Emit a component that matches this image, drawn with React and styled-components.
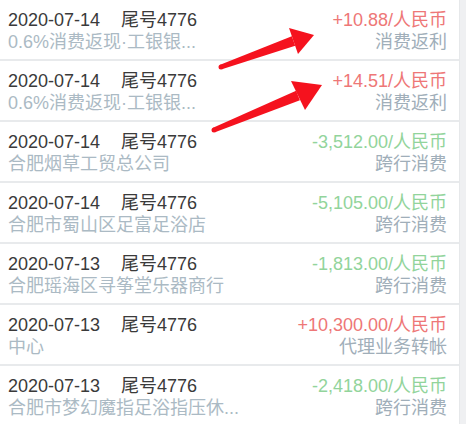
import React from "react";
import styled, { createGlobalStyle } from "styled-components";

const GlobalStyle = createGlobalStyle`
    html, body {
        margin: 0;
        padding: 0;
        background: #ffffff;
    }
`

const SScreen = styled.div`
    position: relative;
    width: 466px;
    height: 424px;
    overflow: hidden;
    display: flex;
    background: #ffffff;
    font-family: "Liberation Sans", "Noto Sans CJK SC", sans-serif;
`

const SList = styled.ul`
    flex: 1;
    margin: 0;
    padding: 0;
    list-style: none;
`

const SRow = styled.li`
    display: flex;
    justify-content: space-between;
    height: 59px;
    box-sizing: content-box;
    padding: 0 12px 0 8px;
    border-bottom: 2px solid #e8eaec;

    div.left, div.right {
        display: flex;
        flex-direction: column;
        padding-top: 9px;
        font-size: 18px;
        line-height: 22px;
        white-space: nowrap;
    }

    div.right {
        align-items: flex-end;
    }

    span.date {
        color: #3a3a3a;
    }

    span.card {
        margin-left: 21px;
    }

    span.desc {
        color: #abbac4;
    }

    span.type {
        color: #a0aeb9;
    }
`

const SAmount = styled.span`
    color: ${props => props.income ? '#ee7777' : '#92d49b'};
`

const SScrollbar = styled.div`
    width: 6px;
    background: #eff0f2;
    border-left: 1px solid #e6e8ea;
`

const SArrows = styled.svg`
    position: absolute;
    left: 0;
    top: 0;
    pointer-events: none;
`

const rows = [
    { date: '2020-07-14', desc: '0.6%消费返现·工银银...', amount: '+10.88/人民币', type: '消费返利' },
    { date: '2020-07-14', desc: '0.6%消费返现·工银银...', amount: '+14.51/人民币', type: '消费返利' },
    { date: '2020-07-14', desc: '合肥烟草工贸总公司', amount: '-3,512.00/人民币', type: '跨行消费' },
    { date: '2020-07-14', desc: '合肥市蜀山区足富足浴店', amount: '-5,105.00/人民币', type: '跨行消费' },
    { date: '2020-07-13', desc: '合肥瑶海区寻筝堂乐器商行', amount: '-1,813.00/人民币', type: '跨行消费' },
    { date: '2020-07-13', desc: '中心', amount: '+10,300.00/人民币', type: '代理业务转帐' },
    { date: '2020-07-13', desc: '合肥市梦幻魔指足浴指压休...', amount: '-2,418.00/人民币', type: '跨行消费' },
]

// tapered shaft from tail to the head base, then a triangular head
const Arrow = ({ tail, tip, top, bottom }) => {
    const base = [(top[0] + bottom[0]) / 2, (top[1] + bottom[1]) / 2]
    const dx = base[0] - tail[0]
    const dy = base[1] - tail[1]
    const len = Math.hypot(dx, dy)
    const nx = -dy / len
    const ny = dx / len
    const p = (pt, w) => `${pt[0] + nx * w},${pt[1] + ny * w}`
    const shaft = `${p(tail, 2.5)} ${p(base, 5)} ${p(base, -5)} ${p(tail, -2.5)}`
    return (
        <g fill="#f5121e">
            <circle cx={tail[0]} cy={tail[1]} r="2.5" />
            <polygon points={shaft} />
            <polygon points={`${top.join(',')} ${tip.join(',')} ${bottom.join(',')}`} />
        </g>
    )
}

const App = () => (
    <>
        <GlobalStyle />
        <SScreen>
            <SList>
                {rows.map((row, i) => (
                    <SRow key={i}>
                        <div className="left">
                            <span className="date">
                                {row.date}
                                <span className="card">尾号4776</span>
                            </span>
                            <span className="desc">{row.desc}</span>
                        </div>
                        <div className="right">
                            <SAmount income={row.amount.startsWith('+')}>{row.amount}</SAmount>
                            <span className="type">{row.type}</span>
                        </div>
                    </SRow>
                ))}
            </SList>
            <SScrollbar />
            <SArrows width="466" height="424">
                <Arrow tail={[221, 67]} tip={[314, 35]} top={[289, 28]} bottom={[298, 54]} />
                <Arrow tail={[214, 130]} tip={[322, 85]} top={[291, 81]} bottom={[305, 110]} />
            </SArrows>
        </SScreen>
    </>
)

export default App;
